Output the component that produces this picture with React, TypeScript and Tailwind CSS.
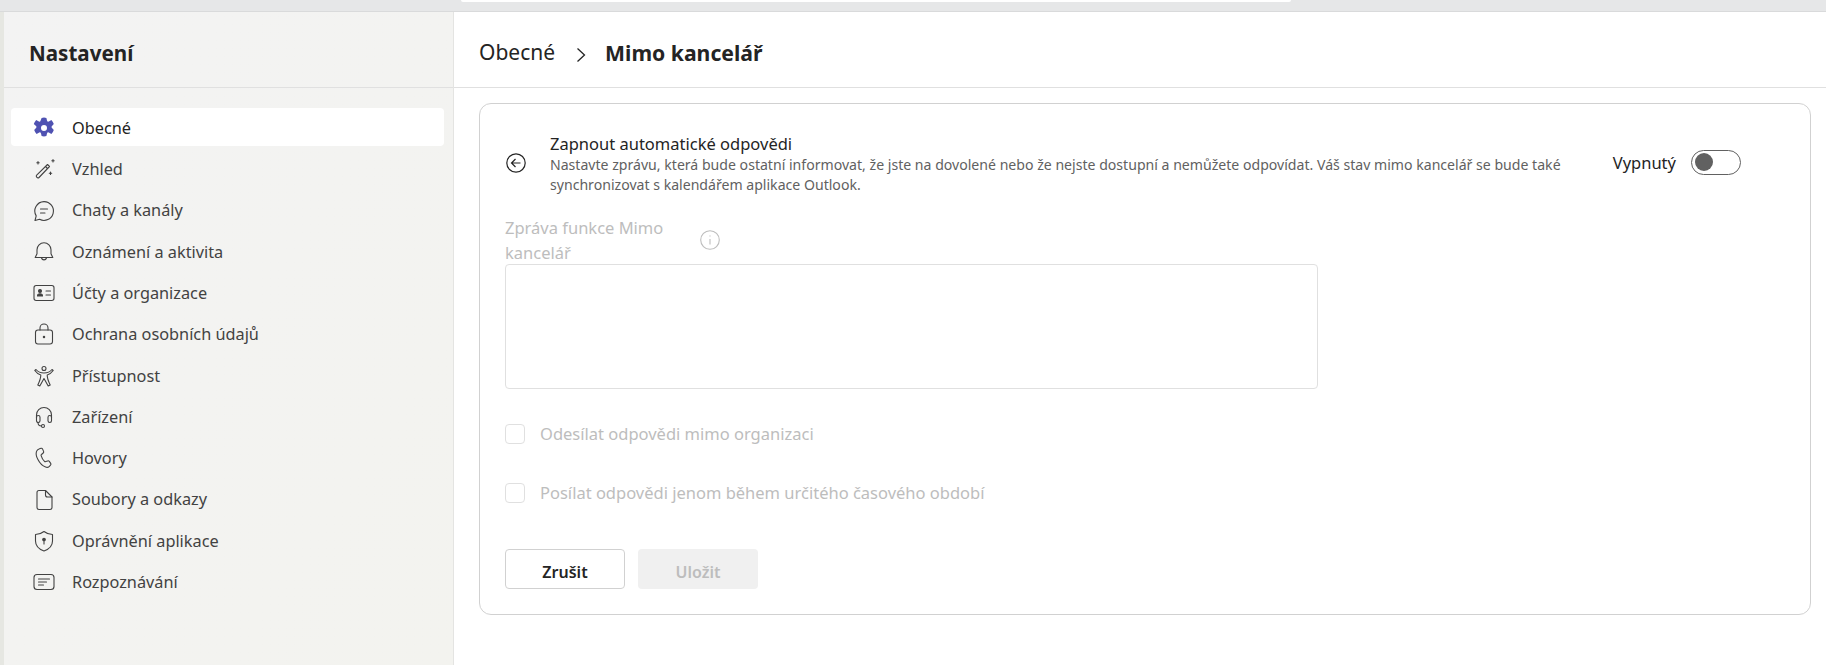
import type { ReactNode } from "react";

const Icon = ({ children }: { children: ReactNode }) => (
  <svg
    viewBox="0 0 24 24"
    fill="none"
    stroke="currentColor"
    strokeWidth={1.1}
    strokeLinecap="round"
    strokeLinejoin="round"
    className="w-6 h-6 shrink-0"
  >
    {children}
  </svg>
);

const navItems: { label: string; icon: ReactNode }[] = [
  {
    label: "Obecné",
    icon: (
      <svg viewBox="0 0 24 24" className="w-6 h-6 shrink-0 text-[#4f52b2]" fill="currentColor">
        <path
          fillRule="evenodd"
          d="M9.6 1.9a10.4 10.4 0 0 1 4.8 0l.6 2.5a1.5 1.5 0 0 0 2.2.9l2.2-1.3a10.4 10.4 0 0 1 2.4 4.1l-1.8 1.8a1.5 1.5 0 0 0 0 2.2l1.8 1.8a10.4 10.4 0 0 1-2.4 4.1l-2.2-1.3a1.5 1.5 0 0 0-2.2.9l-.6 2.5a10.4 10.4 0 0 1-4.8 0l-.6-2.5a1.5 1.5 0 0 0-2.2-.9l-2.2 1.3a10.4 10.4 0 0 1-2.4-4.1l1.8-1.8a1.5 1.5 0 0 0 0-2.2L1.8 8.1a10.4 10.4 0 0 1 2.4-4.1l2.2 1.3A1.5 1.5 0 0 0 8.6 4.4zM12 9a3 3 0 1 0 0 6 3 3 0 0 0 0-6z"
        />
      </svg>
    ),
  },
  {
    label: "Vzhled",
    icon: (
      <Icon>
        <path d="M15.5 7.5l2 2L7 20.5a1.4 1.4 0 0 1-2-.1l-.3-.3a1.4 1.4 0 0 1 0-2z" />
        <path d="M13.5 9.5l2 2" />
        <path d="M6 4.5v2.4M4.8 5.7h2.4M21 2.5v2.4M19.8 3.7h2.4M18.5 15v2.4M17.3 16.2h2.4" />
      </Icon>
    ),
  },
  {
    label: "Chaty a kanály",
    icon: (
      <Icon>
        <path d="M12 2.6a9.4 9.4 0 1 1-4.4 17.7l-4.6 1.2 1.2-4.6A9.4 9.4 0 0 1 12 2.6z" />
        <path d="M8.5 10h7M8.5 14h4.5" />
      </Icon>
    ),
  },
  {
    label: "Oznámení a aktivita",
    icon: (
      <Icon>
        <path d="M12 2.800a7 7 0 0 1 7 7v4l1.800 3.700H3.200L5 13.800v-4a7 7 0 0 1 7-7z" />
        <path d="M9.500 18a2.600 2.600 0 0 0 5 0" />
      </Icon>
    ),
  },
  {
    label: "Účty a organizace",
    icon: (
      <Icon>
        <rect x="2" y="4.500" width="20" height="15" rx="2.200" />
        <circle cx="8" cy="10" r="1.500" fill="currentColor" />
        <path d="M5.500 15c0-3 5-3 5 0z" fill="currentColor" />
        <path d="M14 10h4.500M14 14h4.500" />
      </Icon>
    ),
  },
  {
    label: "Ochrana osobních údajů",
    icon: (
      <Icon>
        <rect x="3.500" y="8" width="17" height="14" rx="2.500" />
        <path d="M8 8V6a4 4 0 0 1 8 0v2" />
        <circle cx="12" cy="15" r="0.700" fill="currentColor" />
      </Icon>
    ),
  },
  {
    label: "Přístupnost",
    icon: (
      <Icon>
        <circle cx="12" cy="4.500" r="2" />
        <path d="M4 5.500c2 2.500 4.500 3.500 8 3.500s6-1 8-3.500l1.200 1c-1.800 2.500-3.700 3.800-6 4.500 0 3 .5 5 3 10l-2 1-4.200-7.500L7.800 22l-2-1c2.500-5 3-7 3-10-2.300-.7-4.200-2-6-4.500z" />
      </Icon>
    ),
  },
  {
    label: "Zařízení",
    icon: (
      <Icon>
        <path d="M4.500 13v-3a7.500 7.500 0 0 1 15 0v3" />
        <rect x="4.500" y="10.500" width="3.500" height="7" rx="1.700" />
        <rect x="16" y="10.500" width="3.500" height="7" rx="1.700" />
        <path d="M6 17.500c0 2.500 1.500 3.500 3.500 3.500" />
        <circle cx="11" cy="21" r="1.500" />
      </Icon>
    ),
  },
  {
    label: "Hovory",
    icon: (
      <Icon>
        <path d="M7.500 2.700l1.500-.4c.7-.2 1.300.1 1.600.8l1 2.300c.2.600.1 1.200-.4 1.600L9.500 8.500c-.4.300-.5.700-.4 1.100.6 2 1.900 4.300 3.400 5.800.3.300.8.400 1.200.2l2-.7c.6-.2 1.200 0 1.600.5l1.400 2c.4.600.3 1.300-.2 1.800l-1.100 1.100c-1 1-2.500 1.300-3.800.8-3.200-1.200-6-4.200-7.800-7.800C4.100 10.200 3.800 7.500 4.500 5.400c.4-1.300 1.600-2.300 3-2.700z" />
      </Icon>
    ),
  },
  {
    label: "Soubory a odkazy",
    icon: (
      <Icon>
        <path d="M7 2.500h6.500L20 9v10.500a2 2 0 0 1-2 2H7a2 2 0 0 1-2-2v-15a2 2 0 0 1 2-2z" />
        <path d="M13.500 2.500V7a2 2 0 0 0 2 2H20" />
      </Icon>
    ),
  },
  {
    label: "Oprávnění aplikace",
    icon: (
      <Icon>
        <path d="M12 2.500c2.500 2 5 3 8.500 3v6.500c0 4.800-3 8-8.500 10-5.500-2-8.500-5.200-8.500-10V5.500c3.500 0 6-1 8.500-3z" />
        <circle cx="12" cy="10.500" r="1.300" fill="currentColor" />
        <path d="M12 11.500v3.500" />
      </Icon>
    ),
  },
  {
    label: "Rozpoznávání",
    icon: (
      <Icon>
        <rect x="2" y="4.500" width="20" height="15" rx="3" />
        <path d="M6.500 9h11M6.500 12h8M6.500 15h5" />
      </Icon>
    ),
  },
];

export default function App() {
  return (
    <div className="h-[665px] w-[1826px] overflow-hidden bg-white font-['Noto_Sans',sans-serif] flex flex-col">
      {/* browser strip on top */}
      <div className="h-3 shrink-0 bg-[#e6e7e8] border-b border-[#d9dadb] pl-[461px]">
        <div className="h-[2px] w-[830px] bg-white rounded-b" />
      </div>

      <div className="flex flex-1 min-h-0">
        <aside className="w-[454px] shrink-0 border-l-4 border-l-[#e6e7e2] border-r border-r-[#e4e4e2] bg-gradient-to-br from-[#f3f3f3] to-[#f3f3ef] flex flex-col">
          <div className="h-[76px] shrink-0 border-b border-[#e0e0e0] pl-[25px] flex items-center">
            <h1 className="text-[20.600px] font-bold text-[#242424] mt-[8px]">Nastavení</h1>
          </div>
          <nav className="pt-5 pl-[7px] pr-[9px] flex flex-col gap-[3.3px]">
            {navItems.map((item, i) => (
              <div
                key={item.label}
                className={`h-[38px] pt-[2px] flex items-center gap-[16px] pl-[21px] rounded text-[16.300px] ${
                  i === 0 ? "bg-white text-[#242424]" : "text-[#424242]"
                }`}
              >
                {item.icon}
                <span>{item.label}</span>
              </div>
            ))}
          </nav>
        </aside>

        <main className="flex-1 min-w-0 flex flex-col">
          <div className="h-[76px] shrink-0 border-b border-[#e0e0e0] pl-[25px] flex items-center text-[#242424]">
            <span className="text-[21px] mt-[6px]">Obecné</span>
            <svg viewBox="0 0 10 16" fill="none" stroke="currentColor" strokeWidth={1.3} className="w-[10px] h-4 mt-[11px] ml-[21px] mr-[19px]">
              <path d="M1.500 1.500L8.500 8l-7 6.500" />
            </svg>
            <span className="text-[21.200px] font-bold mt-[6px]">Mimo kancelář</span>
          </div>

          <div className="mt-[15px] ml-[25px] mr-[15px] h-[512px] border border-[#d1d1d1] rounded-xl pl-[25px] pr-[69px] pt-[29px]">
            <div className="flex items-start">
              <svg viewBox="0 0 20 20" fill="none" stroke="#242424" strokeWidth={1.200} className="w-5 h-5 mt-[20px] ml-[1px] shrink-0">
                <circle cx="10" cy="10" r="9.200" />
                <path d="M14.500 10h-9M9.500 6l-4 4 4 4" />
              </svg>
              <div className="ml-[24px] w-[1030px]">
                <div className="text-[16.500px] leading-[22px] text-[#242424]">Zapnout automatické odpovědi</div>
                <p className="text-[14.100px] leading-[20px] text-[#616161]">
                  Nastavte zprávu, která bude ostatní informovat, že jste na dovolené nebo že nejste dostupní a nemůžete odpovídat. Váš stav mimo kancelář se bude také synchronizovat s kalendářem aplikace Outlook.
                </p>
              </div>
              <div className="ml-auto flex items-center mt-[16px]">
                <span className="text-[16.500px] text-[#242424] pt-[2px]">Vypnutý</span>
                <div className="ml-[15px] w-[50px] h-[25px] rounded-full border border-[#616161] pl-[3px] flex items-center">
                  <div className="w-[18px] h-[18px] rounded-full bg-[#616161]" />
                </div>
              </div>
            </div>

            <div className="mt-[20px] flex items-center text-[#bdbdbd]">
              <div className="w-[165px] text-[16.500px] leading-[25px]">Zpráva funkce Mimo kancelář</div>
              <svg viewBox="0 0 20 20" fill="none" stroke="currentColor" strokeWidth={1.100} className="w-5 h-5 ml-[30px]">
                <circle cx="10" cy="10" r="9.300" />
                <path d="M10 9v5.500M10 5.500v1" />
              </svg>
            </div>
            <div className="-mt-[1px] w-[813px] h-[125px] border border-[#e0e0e0] rounded" />

            <div className="mt-[35px] flex items-center text-[16.500px] text-[#bdbdbd] h-5">
              <div className="w-5 h-5 border border-[#e0e0e0] rounded" />
              <span className="ml-[15px]">Odesílat odpovědi mimo organizaci</span>
            </div>
            <div className="mt-[39px] flex items-center text-[16.500px] text-[#bdbdbd] h-5">
              <div className="w-5 h-5 border border-[#e0e0e0] rounded" />
              <span className="ml-[15px]">Posílat odpovědi jenom během určitého časového období</span>
            </div>

            <div className="mt-[46px] flex gap-[13px]">
              <button className="w-[120px] h-[40px] pt-[5px] border border-[#d1d1d1] rounded text-[16px] font-semibold text-[#242424]">Zrušit</button>
              <button className="w-[120px] h-[40px] pt-[5px] bg-[#f0f0f0] rounded text-[16px] font-semibold text-[#bdbdbd]">Uložit</button>
            </div>
          </div>
        </main>
      </div>
    </div>
  );
}
